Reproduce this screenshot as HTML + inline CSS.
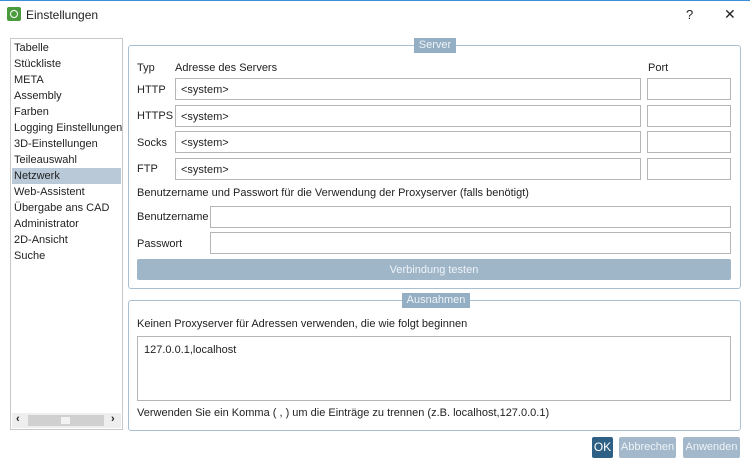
<!DOCTYPE html><html><head><style>
body{margin:0;width:750px;height:467px;background:#fff;font-family:"Liberation Sans",sans-serif;font-size:11px;color:#222;position:relative;overflow:hidden}
.a{position:absolute}
.in{position:absolute;border:1px solid #b5b5b5;background:#fff;box-sizing:border-box;padding:5px 5px 3px;font-size:11px}
.grp{position:absolute;border:1px solid #a9c0d2;border-radius:3px;box-sizing:border-box}
.tt{position:absolute;background:#94afc4;color:#eef3f7;text-align:center;font-size:11px;line-height:15px}
.li{position:absolute;left:14px;font-size:11px}
</style></head><body>
<div class="a" style="left:0;top:0;width:750px;height:1px;background:#3b8fd8"></div>
<div class="a" style="left:7px;top:7px;width:14px;height:14px;background:#4c9a3e;border-radius:2px"><div class="a" style="left:3px;top:3px;width:6px;height:6px;border:1px solid #fff;border-radius:50%"></div></div>
<div class="a" style="left:26px;top:8px;font-size:12px">Einstellungen</div>
<div class="a" style="left:686px;top:7px;font-size:13px">?</div>
<div class="a" style="left:724px;top:7px;font-size:14px;line-height:14px">✕</div>

<div class="a" style="left:10px;top:38px;width:113px;height:392px;border:1px solid #c9c9c9;box-sizing:border-box"></div>
<div class="a" style="left:12px;top:168px;width:109px;height:16px;background:#b9c9d8"></div>
<div class="li" style="top:42px">Tabelle</div>
<div class="li" style="top:58px">Stückliste</div>
<div class="li" style="top:74px">META</div>
<div class="li" style="top:90px">Assembly</div>
<div class="li" style="top:106px">Farben</div>
<div class="li" style="top:122px">Logging Einstellungen</div>
<div class="li" style="top:138px">3D-Einstellungen</div>
<div class="li" style="top:154px">Teileauswahl</div>
<div class="li" style="top:170px">Netzwerk</div>
<div class="li" style="top:186px">Web-Assistent</div>
<div class="li" style="top:202px">Übergabe ans CAD</div>
<div class="li" style="top:218px">Administrator</div>
<div class="li" style="top:234px">2D-Ansicht</div>
<div class="li" style="top:250px">Suche</div>
<div class="a" style="left:12px;top:413px;width:109px;height:15px;background:#eee"></div>
<div class="a" style="left:28px;top:415px;width:76px;height:11px;background:#d0d0d0"></div>
<div class="a" style="left:61px;top:417px;width:9px;height:7px;background:#f2f2f2"></div>
<div class="a" style="left:16px;top:413px;font-size:11px;font-weight:bold">‹</div>
<div class="a" style="left:111px;top:413px;font-size:11px;font-weight:bold">›</div>

<div class="grp" style="left:128px;top:45px;width:613px;height:244px"></div>
<div class="tt" style="left:414px;top:38px;width:42px">Server</div>
<div class="a" style="left:137px;top:62px">Typ</div>
<div class="a" style="left:175px;top:62px">Adresse des Servers</div>
<div class="a" style="left:648px;top:62px">Port</div>
<div class="a" style="left:137px;top:84px">HTTP</div>
<div class="a" style="left:137px;top:110px">HTTPS</div>
<div class="a" style="left:137px;top:137px">Socks</div>
<div class="a" style="left:137px;top:163px">FTP</div>
<div class="in" style="left:175px;top:78px;width:466px;height:22px">&lt;system&gt;</div>
<div class="in" style="left:175px;top:105px;width:466px;height:22px">&lt;system&gt;</div>
<div class="in" style="left:175px;top:131px;width:466px;height:22px">&lt;system&gt;</div>
<div class="in" style="left:175px;top:158px;width:466px;height:22px">&lt;system&gt;</div>
<div class="in" style="left:647px;top:78px;width:84px;height:22px"></div>
<div class="in" style="left:647px;top:105px;width:84px;height:22px"></div>
<div class="in" style="left:647px;top:131px;width:84px;height:22px"></div>
<div class="in" style="left:647px;top:158px;width:84px;height:22px"></div>
<div class="a" style="left:137px;top:187px">Benutzername und Passwort für die Verwendung der Proxyserver (falls benötigt)</div>
<div class="a" style="left:137px;top:211px">Benutzername</div>
<div class="a" style="left:137px;top:238px">Passwort</div>
<div class="in" style="left:210px;top:206px;width:521px;height:22px"></div>
<div class="in" style="left:210px;top:232px;width:521px;height:22px"></div>
<div class="a" style="left:137px;top:259px;width:594px;height:21px;background:#9fb6c9;color:#eef3f7;text-align:center;line-height:22px;border-radius:2px">Verbindung testen</div>

<div class="grp" style="left:128px;top:300px;width:613px;height:131px"></div>
<div class="tt" style="left:402px;top:293px;width:68px">Ausnahmen</div>
<div class="a" style="left:137px;top:318px">Keinen Proxyserver für Adressen verwenden, die wie folgt beginnen</div>
<div class="in" style="left:137px;top:336px;width:594px;height:65px;padding:7px 6px">127.0.0.1,localhost</div>
<div class="a" style="left:137px;top:407px">Verwenden Sie ein Komma ( , ) um die Einträge zu trennen (z.B. localhost,127.0.0.1)</div>

<div class="a" style="left:592px;top:437px;width:21px;height:21px;background:#2e5f84;color:#fff;text-align:center;line-height:21px;border-radius:2px;font-size:12px">OK</div>
<div class="a" style="left:619px;top:437px;width:57px;height:21px;background:#a3b9cb;color:#eef3f7;text-align:center;line-height:21px;border-radius:2px">Abbrechen</div>
<div class="a" style="left:683px;top:437px;width:57px;height:21px;background:#a3b9cb;color:#eef3f7;text-align:center;line-height:21px;border-radius:2px">Anwenden</div>
</body></html>
